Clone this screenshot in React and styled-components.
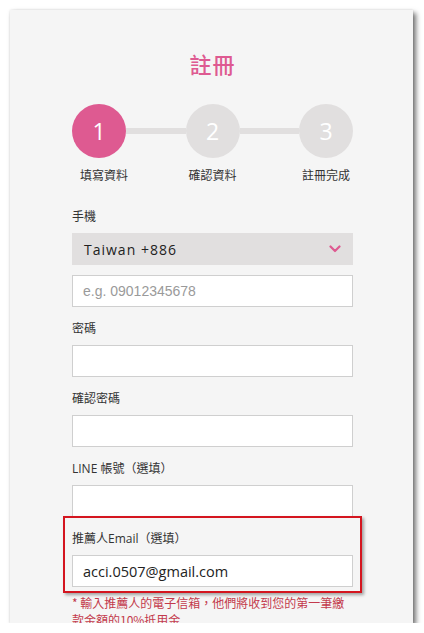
import React from "react";
import styled, { createGlobalStyle } from "styled-components";

const GlobalStyle = createGlobalStyle`
  html, body { margin: 0; padding: 0; background: #ffffff; }
  body { font-family: "Open Sans", "Noto Sans CJK TC", sans-serif; }
  * { box-sizing: border-box; }
`;

const PINK = "#de5a91";
const GRAY = "#e1dfdf";

const Card = styled.div`
  margin: 10px 0 0 10px;
  width: 403px;
  height: 613px;
  background: #f5f5f5;
  box-shadow: 3px 3px 5px rgba(0, 0, 0, 0.55), 0 0 2px rgba(0, 0, 0, 0.12);
  padding: 38px 60px 0 62px;
  overflow: hidden;
`;

const Title = styled.h1`
  margin: 0;
  text-align: center;
  font-family: "Noto Sans CJK TC", sans-serif;
  font-size: 22px;
  line-height: 30px;
  font-weight: 500;
  color: ${PINK};
  letter-spacing: 1px;
`;

const Steps = styled.div`
  margin-top: 26px;
  display: flex;
  align-items: flex-start;
`;

const Step = styled.div`
  width: 54px;
  display: flex;
  flex-direction: column;
  align-items: center;
`;

const Circle = styled.div`
  width: 54px;
  height: 54px;
  border-radius: 50%;
  background: ${(p) => (p.$active ? PINK : GRAY)};
  color: #ffffff;
  display: flex;
  align-items: center;
  justify-content: center;
  font-family: "Open Sans", sans-serif;
  font-size: 23px;
  font-weight: 500;
`;

const Connector = styled.div`
  flex: 1;
  height: 6px;
  margin-top: 24px;
  background: ${GRAY};
`;

const StepLabel = styled.div`
  margin-top: 9px;
  white-space: nowrap;
  font-family: "Noto Sans CJK TC", sans-serif;
  font-size: 12px;
  line-height: 16px;
  color: #333;
  transform: translateX(${(p) => p.$shift || 0}px);
`;

const Form = styled.div`
  margin-top: 26px;
  display: flex;
  flex-direction: column;
  gap: 14px;
`;

const Field = styled.div`
  position: relative;
  display: flex;
  flex-direction: column;
`;

const Label = styled.label`
  font-family: "Open Sans", "Noto Sans CJK TC", sans-serif;
  font-size: 12px;
  line-height: 16px;
  color: #333;
  margin-bottom: 8px;
`;

const Select = styled.div`
  height: 32px;
  background: ${GRAY};
  display: flex;
  align-items: center;
  justify-content: space-between;
  padding: 0 12px 0 12px;
  font-family: "Open Sans", sans-serif;
  font-size: 14px;
  font-weight: 500;
  letter-spacing: 1px;
  color: #222;
  margin-bottom: 10px;
`;

const Input = styled.div`
  height: 32px;
  background: #ffffff;
  border: 1px solid #cfcfcf;
  display: flex;
  align-items: center;
  padding: 0 10px;
  font-family: ${(p) =>
    p.$placeholder ? '"Liberation Sans", Arial, sans-serif' : '"Open Sans", sans-serif'};
  font-size: ${(p) => (p.$placeholder ? "14px" : "14.5px")};
  color: ${(p) => (p.$placeholder ? "#9a9a9a" : "#222")};
`;

const Highlight = styled.div`
  position: absolute;
  top: -15px;
  left: -9px;
  right: -9px;
  bottom: -6px;
  border: 2px solid #d4151f;
  box-shadow: 2px 2px 3px rgba(0, 0, 0, 0.35);
  pointer-events: none;
`;

const Note = styled.p`
  margin: -7px 0 0 0;
  font-family: "Noto Sans CJK TC", sans-serif;
  font-size: 12px;
  line-height: 17px;
  color: #c33a4c;
`;

const Chevron = () => (
  <svg width="12" height="8" viewBox="0 0 12 8" aria-hidden="true">
    <path d="M1.5 1.5 L6 6 L10.5 1.5" fill="none" stroke={PINK} strokeWidth="2.2" strokeLinecap="round" strokeLinejoin="round" />
  </svg>
);

const steps = [
  { n: 1, label: "填寫資料", active: true, shift: 5 },
  { n: 2, label: "確認資料" },
  { n: 3, label: "註冊完成" },
];

export default function App() {
  return (
    <>
      <GlobalStyle />
      <Card>
        <Title>註冊</Title>
        <Steps>
          {steps.map((s, i) => (
            <React.Fragment key={s.n}>
              {i > 0 && <Connector />}
              <Step>
                <Circle $active={s.active}>{s.n}</Circle>
                <StepLabel $shift={s.shift}>{s.label}</StepLabel>
              </Step>
            </React.Fragment>
          ))}
        </Steps>
        <Form>
          <Field>
            <Label>手機</Label>
            <Select>
              <span>Taiwan +886</span>
              <Chevron />
            </Select>
            <Input $placeholder>e.g. 09012345678</Input>
          </Field>
          <Field>
            <Label>密碼</Label>
            <Input />
          </Field>
          <Field>
            <Label>確認密碼</Label>
            <Input />
          </Field>
          <Field>
            <Label>LINE 帳號（選填）</Label>
            <Input />
          </Field>
          <Field>
            <Label>推薦人Email（選填）</Label>
            <Input>acci.0507@gmail.com</Input>
            <Highlight />
          </Field>
          <Note>* 輸入推薦人的電子信箱，他們將收到您的第一筆繳款金額的10%抵用金</Note>
        </Form>
      </Card>
    </>
  );
}
